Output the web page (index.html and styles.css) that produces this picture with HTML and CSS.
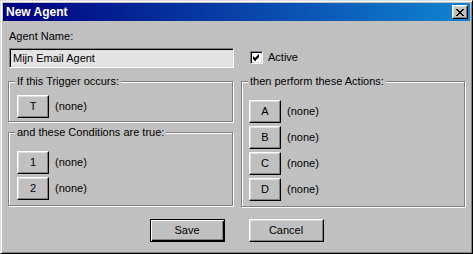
FILE: index.html
```html
<!DOCTYPE html>
<html lang="en">
<head>
    <meta charset="UTF-8">
    <title>New Agent</title>
    <link rel="stylesheet" href="styles.css">
</head>
<body>
    <div class="window">
        <div class="titlebar">
            <span class="title">New Agent</span>
            <button class="close" type="button" aria-label="Close">
                <svg width="8" height="7" viewBox="0 0 8 7"><path d="M0 0h2v1h1v1h2v-1h1v-1h2v1h-1v1h-1v1h-1v1h1v1h1v1h1v1h-2v-1h-1v-1h-2v1h-1v1h-2v-1h1v-1h1v-1h1v-1h-1v-1h-1v-1h-1z" fill="#000"/></svg>
            </button>
        </div>

        <form class="content" id="agentForm">
            <div class="grid">
                <div class="name-field">
                    <label for="agentName">Agent Name:</label>
                    <input type="text" id="agentName" value="Mijn Email Agent">
                </div>
                <label class="check">
                    <span class="box">
                        <svg width="7" height="7" viewBox="0 0 7 7"><path d="M6 0v3l-1 1v0l-2 2v1h-1l-2-2v-3l2 2z" fill="#000"/></svg>
                    </span>
                    Active
                </label>

                <div class="left-col">
                    <div class="group group-trigger">
                        <span class="group-title">If this Trigger occurs:</span>
                        <div class="rows">
                            <div class="row"><button type="button" class="btn slot">T</button><span>(none)</span></div>
                        </div>
                    </div>
                    <div class="group group-cond">
                        <span class="group-title">and these Conditions are true:</span>
                        <div class="rows spaced">
                            <div class="row"><button type="button" class="btn slot">1</button><span>(none)</span></div>
                            <div class="row"><button type="button" class="btn slot">2</button><span>(none)</span></div>
                        </div>
                    </div>
                </div>

                <div class="group group-actions">
                    <span class="group-title">then perform these Actions:</span>
                    <div class="rows spaced">
                        <div class="row"><button type="button" class="btn slot">A</button><span>(none)</span></div>
                        <div class="row"><button type="button" class="btn slot">B</button><span>(none)</span></div>
                        <div class="row"><button type="button" class="btn slot">C</button><span>(none)</span></div>
                        <div class="row"><button type="button" class="btn slot">D</button><span>(none)</span></div>
                    </div>
                </div>
            </div>

            <div class="footer">
                <button type="submit" class="btn wide default">Save</button>
                <button type="button" class="btn wide">Cancel</button>
            </div>
        </form>
    </div>
</body>
</html>
```

FILE: styles.css
```css
* {
    box-sizing: border-box;
}
body {
    margin: 0;
    background: #c0c0c0;
    font-family: "Liberation Sans", Arial, sans-serif;
    font-size: 11px;
    line-height: 13px;
    color: #000;
}
.window {
    width: 473px;
    height: 254px;
    background: #c0c0c0;
    border: 1px solid;
    border-color: #dfdfdf #000 #000 #dfdfdf;
    box-shadow: inset 1px 1px #fff, inset -1px -1px #808080;
    padding: 2px;
}
.titlebar {
    height: 18px;
    background: linear-gradient(to right, #000080, #1084d0);
    display: flex;
    align-items: center;
    justify-content: space-between;
    padding: 0 2px 0 3px;
}
.title {
    color: #fff;
    font-weight: bold;
    font-size: 12px;
}
.close {
    width: 16px;
    height: 14px;
    padding: 0;
    background: #c0c0c0;
    border: 1px solid;
    border-color: #fff #000 #000 #fff;
    box-shadow: inset -1px -1px #808080, inset 1px 1px #dfdfdf;
    display: flex;
    align-items: center;
    justify-content: center;
}
.close svg {
    display: block;
}
.content {
    margin: 0;
    padding-top: 9px;
}
.grid {
    display: grid;
    grid-template-columns: 225px 224px;
    column-gap: 8px;
    row-gap: 13px;
    padding-left: 5px;
}
.name-field label {
    display: block;
    padding-left: 1px;
    margin-bottom: 5px;
}
.name-field input {
    display: block;
    width: 225px;
    height: 20px;
    margin-left: 1px;
    padding: 0 3px;
    font: inherit;
    background: #e4e4e4;
    border: 1px solid;
    border-color: #808080 #fff #fff #808080;
    box-shadow: inset 1px 1px #000, inset -1px -1px #dfdfdf;
    outline: none;
}
.check {
    display: flex;
    align-items: center;
    gap: 5px;
    align-self: end;
    margin: 0 0 4px 9px;
}
.box {
    width: 13px;
    height: 13px;
    background: #fff;
    border: 1px solid;
    border-color: #808080 #fff #fff #808080;
    box-shadow: inset 1px 1px #000, inset -1px -1px #dfdfdf;
    display: flex;
    align-items: center;
    justify-content: center;
}
.box svg {
    display: block;
}
.left-col {
    display: flex;
    flex-direction: column;
    gap: 10px;
}
.group {
    border: 1px solid #808080;
    box-shadow: inset 1px 1px #fff, 1px 1px #fff;
}
.group-title {
    display: block;
    width: fit-content;
    margin: -7px 0 0 6px;
    padding: 0 2px;
    background: #c0c0c0;
}
.rows {
    display: flex;
    flex-direction: column;
    gap: 3px;
    padding: 7px 0 3px 8px;
}
.rows.spaced {
    padding-top: 12px;
    padding-bottom: 5px;
}
.group-actions .rows {
    padding-left: 7px;
}
.row {
    display: flex;
    align-items: center;
    gap: 6px;
}
.btn {
    font: inherit;
    color: #000;
    background: #c0c0c0;
    border: 1px solid;
    border-color: #fff #000 #000 #fff;
    box-shadow: inset -1px -1px #808080, inset 1px 1px #dfdfdf;
    padding: 0;
    height: 23px;
}
.slot {
    width: 32px;
}
.footer {
    display: flex;
    justify-content: center;
    gap: 24px;
    margin-top: 12px;
}
.wide {
    width: 75px;
}
.default {
    border-color: #000;
    box-shadow: inset 1px 1px #fff, inset -1px -1px #000, inset -2px -2px #808080;
}
```
